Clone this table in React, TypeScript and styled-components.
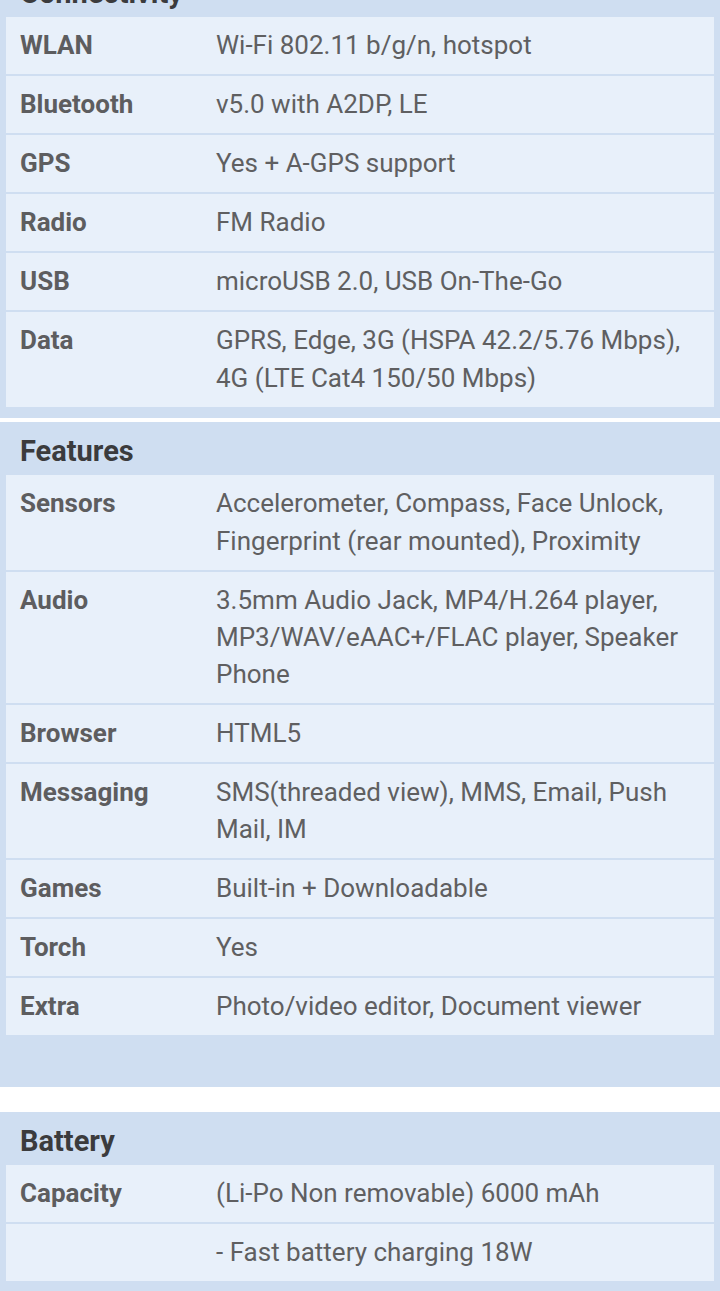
import React from 'react'
import styled, { createGlobalStyle } from 'styled-components'

const GlobalStyle = createGlobalStyle`
  html, body {
    margin: 0;
    padding: 0;
    background: #ffffff;
    font-family: Roboto, "Liberation Sans", Arial, sans-serif;
  }
`

type Spec = { label: string, value: string }
type Group = { title: string, specs: Spec[], trailing: number, gap: number }

const groups: Group[] = [
  {
    title: 'Connectivity',
    trailing: 11.5,
    gap: 4,
    specs: [
      { label: 'WLAN', value: 'Wi-Fi 802.11 b/g/n, hotspot' },
      { label: 'Bluetooth', value: 'v5.0 with A2DP, LE' },
      { label: 'GPS', value: 'Yes + A-GPS support' },
      { label: 'Radio', value: 'FM Radio' },
      { label: 'USB', value: 'microUSB 2.0, USB On-The-Go' },
      { label: 'Data', value: 'GPRS, Edge, 3G (HSPA 42.2/5.76 Mbps), 4G (LTE Cat4 150/50 Mbps)' },
    ],
  },
  {
    title: 'Features',
    trailing: 51.7,
    gap: 24.5,
    specs: [
      { label: 'Sensors', value: 'Accelerometer, Compass, Face Unlock, Fingerprint (rear mounted), Proximity' },
      { label: 'Audio', value: '3.5mm Audio Jack, MP4/H.264 player, MP3/WAV/eAAC+/FLAC player, Speaker Phone' },
      { label: 'Browser', value: 'HTML5' },
      { label: 'Messaging', value: 'SMS(threaded view), MMS, Email, Push Mail, IM' },
      { label: 'Games', value: 'Built-in + Downloadable' },
      { label: 'Torch', value: 'Yes' },
      { label: 'Extra', value: 'Photo/video editor, Document viewer' },
    ],
  },
  {
    title: 'Battery',
    trailing: 11.5,
    gap: 0,
    specs: [
      { label: 'Capacity', value: '(Li-Po Non removable) 6000 mAh' },
      { label: '', value: '- Fast battery charging 18W' },
    ],
  },
]

// page is scrolled a little: the Connectivity title sits above the top edge
const Page = styled.div`
  margin-top: -36.3px;
`

const Section = styled.section<{ $trailing: number, $gap: number }>`
  background: #cfdef1;
  padding: 0 6px ${(p) => p.$trailing}px;
  margin-bottom: ${(p) => p.$gap}px;
`

const Title = styled.h2`
  margin: 0;
  height: 53.3px;
  padding: 5px 0 0 14px;
  box-sizing: border-box;
  display: flex;
  align-items: center;
  font-size: 29px;
  font-weight: 700;
  color: #3b3b3d;
`

const Table = styled.div`
  display: flex;
  flex-direction: column;
  gap: 2px;
`

const Row = styled.div`
  display: grid;
  grid-template-columns: 196px 1fr;
  padding: 10px 14px;
  background: #e8f0fa;
  font-size: 26px;
  line-height: 37.1px;
`

const Label = styled.div`
  font-weight: 700;
  color: #5d5d5f;
`

const Value = styled.div`
  color: #5f5f61;
`

export default function App() {
  return (
    <>
      <GlobalStyle />
      <Page>
        {groups.map((group) => (
          <Section key={group.title} $trailing={group.trailing} $gap={group.gap}>
            <Title>{group.title}</Title>
            <Table>
              {group.specs.map((spec, i) => (
                <Row key={i}>
                  <Label>{spec.label}</Label>
                  <Value>{spec.value}</Value>
                </Row>
              ))}
            </Table>
          </Section>
        ))}
      </Page>
    </>
  )
}
